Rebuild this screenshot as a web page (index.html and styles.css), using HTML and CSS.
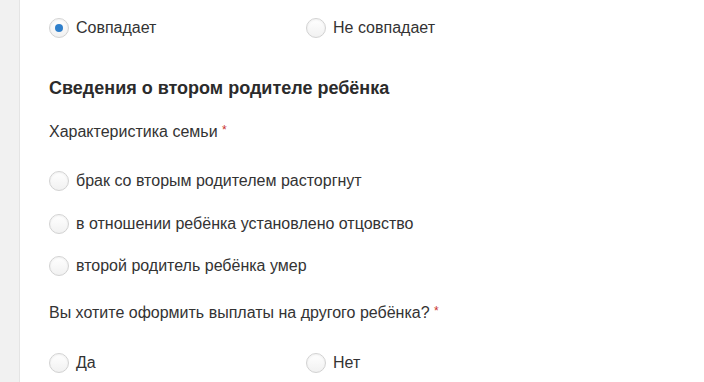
FILE: index.html
```html
<!DOCTYPE html>
<html lang="ru">
<head>
    <meta charset="utf-8">
    <title>Сведения о втором родителе</title>
    <link rel="stylesheet" href="styles.css">
</head>
<body>
    <div class="page">
        <div class="side"></div>
        <form class="form">
            <div class="choice-row first">
                <label class="radio"><span class="dot checked"></span>Совпадает</label>
                <label class="radio"><span class="dot"></span>Не совпадает</label>
            </div>

            <h2 class="section-title">Сведения о втором родителе ребёнка</h2>

            <div class="field-label">Характеристика семьи <span class="req">*</span></div>
            <div class="options">
                <label class="radio"><span class="dot"></span>брак со вторым родителем расторгнут</label>
                <label class="radio"><span class="dot"></span>в отношении ребёнка установлено отцовство</label>
                <label class="radio"><span class="dot"></span>второй родитель ребёнка умер</label>
            </div>

            <div class="field-label question">Вы хотите оформить выплаты на другого ребёнка? <span class="req">*</span></div>
            <div class="choice-row last">
                <label class="radio"><span class="dot"></span>Да</label>
                <label class="radio"><span class="dot"></span>Нет</label>
            </div>
        </form>
    </div>
</body>
</html>
```

FILE: styles.css
```css
* {
    margin: 0;
    padding: 0;
    box-sizing: border-box;
}
body {
    font-family: 'Liberation Sans', Arial, sans-serif;
    font-size: 16px;
    color: #333;
    background: #fff;
}
.page {
    display: flex;
    height: 382px;
    overflow: hidden;
}
.side {
    width: 20px;
    background: #f1f1f1;
    border-right: 1px solid #e4e4e4;
}
.form {
    flex: 1;
    padding-left: 29px;
}
.choice-row {
    display: grid;
    grid-template-columns: 257px 257px;
    height: 20px;
}
.choice-row.first {
    margin-top: 18px;
}
.choice-row.last {
    margin-top: 30px;
}
.radio {
    display: flex;
    align-items: center;
    height: 20px;
    line-height: 20px;
}
.dot {
    position: relative;
    width: 20px;
    height: 20px;
    margin-right: 7px;
    border: 1px solid #d2d2d2;
    border-radius: 50%;
    background: linear-gradient(#ffffff, #f1f1f1);
    box-shadow: inset 0 1px 2px rgba(0, 0, 0, 0.06);
}
.dot.checked::after {
    content: '';
    position: absolute;
    left: 5px;
    top: 5px;
    width: 8px;
    height: 8px;
    border-radius: 50%;
    background: #2f7fcb;
}
.section-title {
    margin-top: 40px;
    font-size: 18px;
    font-weight: bold;
    line-height: 20px;
    color: #2b2b2b;
}
.field-label {
    margin-top: 24px;
    line-height: 20px;
}
.field-label.question {
    margin-top: 27px;
}
.req {
    color: #c9302c;
    font-size: 12px;
    vertical-align: top;
    position: relative;
    top: -2px;
}
.options {
    margin-top: 29px;
    display: flex;
    flex-direction: column;
    gap: 22.5px;
}
```
